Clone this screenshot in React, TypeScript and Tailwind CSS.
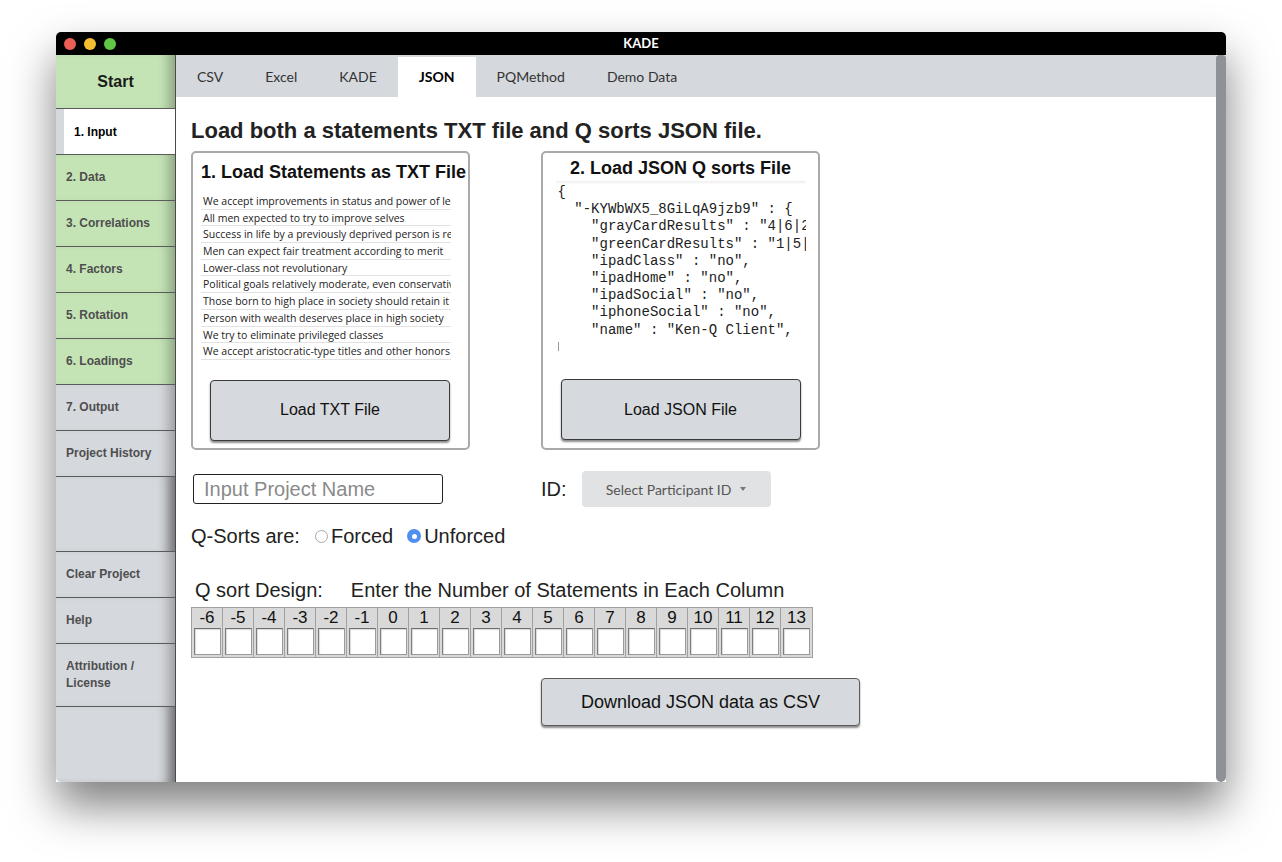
import React from "react";

const sideItems: { label: string; kind: "green" | "grey" | "active" | "blank" }[] = [
  { label: "1. Input", kind: "active" },
  { label: "2. Data", kind: "green" },
  { label: "3. Correlations", kind: "green" },
  { label: "4. Factors", kind: "green" },
  { label: "5. Rotation", kind: "green" },
  { label: "6. Loadings", kind: "green" },
  { label: "7. Output", kind: "grey" },
  { label: "Project History", kind: "grey" },
  { label: "", kind: "blank" },
  { label: "Clear Project", kind: "grey" },
  { label: "Help", kind: "grey" },
  { label: "Attribution /\nLicense", kind: "grey" },
];

const statements = [
  "We accept improvements in status and power of leaders",
  "All men expected to try to improve selves",
  "Success in life by a previously deprived person is rewarded",
  "Men can expect fair treatment according to merit",
  "Lower-class not revolutionary",
  "Political goals relatively moderate, even conservative",
  "Those born to high place in society should retain it",
  "Person with wealth deserves place in high society",
  "We try to eliminate privileged classes",
  "We accept aristocratic-type titles and other honors",
];

const codeLines = [
  "{",
  '  "-KYWbWX5_8GiLqA9jzb9" : {',
  '    "grayCardResults" : "4|6|2|5",',
  '    "greenCardResults" : "1|5|3",',
  '    "ipadClass" : "no",',
  '    "ipadHome" : "no",',
  '    "ipadSocial" : "no",',
  '    "iphoneSocial" : "no",',
  '    "name" : "Ken-Q Client",',
];

const cols = [-6, -5, -4, -3, -2, -1, 0, 1, 2, 3, 4, 5, 6, 7, 8, 9, 10, 11, 12, 13];

const tabs = ["CSV", "Excel", "KADE", "JSON", "PQMethod", "Demo Data"];

const shade = "shadow-[inset_-14px_0_12px_-8px_rgba(0,0,0,0.28)]";

function Sidebar() {
  return (
    <div className={"w-[120px] shrink-0 flex flex-col bg-[#d5d8dd] border-r border-[#4a4a4a] rounded-bl-[5px] overflow-hidden " + shade}>
      <div className={"h-[54px] shrink-0 bg-[#c5e4b6] border-b border-[#5a5a5a] flex items-center justify-center text-[16px] font-bold text-[#1a1a1a] " + shade}>
        Start
      </div>
      {sideItems.map((it, i) => {
        if (it.kind === "active") {
          return (
            <div key={i} className="h-[46px] shrink-0 border-b border-[#5a5a5a] bg-[#d5d8dd] pl-[8px]">
              <div className="h-full bg-white flex items-center pl-[10px] text-[12px] font-bold text-black">{it.label}</div>
            </div>
          );
        }
        if (it.kind === "blank") {
          return <div key={i} className={"h-[75px] shrink-0 border-b border-[#5a5a5a] " + shade} />;
        }
        const multi = it.label.includes("\n");
        return (
          <div
            key={i}
            className={
              "shrink-0 border-b border-[#5a5a5a] flex items-center pl-[10px] text-[12px] font-bold text-[#4e4e4e] leading-[17px] whitespace-pre " +
              shade +
              (multi ? " h-[63px] " : " h-[46px] ") +
              (it.kind === "green" ? "bg-[#c5e4b6]" : "bg-[#d5d8dd]")
            }
          >
            {it.label}
          </div>
        );
      })}
      <div className={"flex-1 " + shade} />
    </div>
  );
}

function BigButton({ label, className }: { label: string; className: string }) {
  return (
    <div
      className={
        "bg-[#d6d9dd] border border-[#3a3a3a] rounded-[4px] shadow-[0_2px_2px_rgba(0,0,0,0.45)] flex items-center justify-center text-[#111] " +
        className
      }
    >
      {label}
    </div>
  );
}

export default function App() {
  return (
    <div className="w-[1282px] h-[862px] bg-white pt-[32px] pl-[56px]" style={{ fontFamily: '"Liberation Sans", Arial, sans-serif' }}>
      <div className="w-[1170px] h-[750px] flex flex-col rounded-t-[5px] shadow-[0_24px_45px_rgba(0,0,0,0.5)] bg-white">
        {/* Title bar */}
        <div className="h-[23px] shrink-0 bg-black rounded-t-[5px] flex items-center px-[8px]">
          <div className="flex gap-[8px]">
            <div className="w-[12px] h-[12px] rounded-full bg-[#ec5f57]" />
            <div className="w-[12px] h-[12px] rounded-full bg-[#f4be33]" />
            <div className="w-[12px] h-[12px] rounded-full bg-[#5fc745]" />
          </div>
          <div className="flex-1 text-center text-white text-[13px] font-bold pr-[52px]" style={{ fontFamily: "Lato, sans-serif" }}>
            KADE
          </div>
        </div>
        {/* Body */}
        <div className="flex-1 flex min-h-0">
          <Sidebar />
          <div className="flex-1 flex flex-col min-w-0">
            {/* Tabs */}
            <div className="h-[42px] shrink-0 bg-[#d5d8dd] flex items-end" style={{ fontFamily: "Lato, sans-serif" }}>
              {tabs.map((t) => (
                <div
                  key={t}
                  className={
                    "px-[21px] h-[40px] flex items-center text-[14px] pb-[2px] " +
                    (t === "JSON" ? "bg-white text-black font-bold" : "text-[#333]")
                  }
                >
                  {t}
                </div>
              ))}
            </div>
            {/* Content */}
            <div className="flex-1 bg-white pl-[15px] pt-[22px]">
              <div className="text-[22px] font-bold text-[#222] leading-[24px]">
                Load both a statements TXT file and Q sorts JSON file.
              </div>
              <div className="flex gap-[71px] mt-[8px]">
                {/* Panel 1 */}
                <div className="w-[279px] h-[299px] border-2 border-[#a9a9a9] rounded-[5px] flex flex-col pl-[8px]">
                  <div className="text-[18px] font-bold text-[#111] mt-[9px] leading-[20px] whitespace-nowrap">1. Load Statements as TXT File</div>
                  <div className="mt-[11px] w-[250px] overflow-hidden" style={{ fontFamily: '"Open Sans", sans-serif' }}>
                    {statements.map((s, i) => (
                      <div key={i} className="h-[16.7px] border-b border-[#e2e2e2] text-[10.5px] leading-[16px] text-[#222] whitespace-nowrap pl-[2px]">
                        {s}
                      </div>
                    ))}
                  </div>
                  <BigButton label="Load TXT File" className="w-[240px] h-[61px] ml-[9px] mt-[20px] text-[16px]" />
                </div>
                {/* Panel 2 */}
                <div className="w-[279px] h-[299px] border-2 border-[#a9a9a9] rounded-[5px] flex flex-col items-center">
                  <div className="text-[18px] font-bold text-[#111] mt-[5px] leading-[20px] whitespace-nowrap">2. Load JSON Q sorts File</div>
                  <div className="mt-[3px] w-[250px] h-[170px] overflow-hidden border-t border-[#f0f0f0] shadow-[inset_0_3px_3px_-2px_rgba(0,0,0,0.06)] pl-[2px] pt-[2px]">
                    {codeLines.map((l, i) => (
                      <div key={i} className="text-[14px] leading-[17.2px] text-[#222] whitespace-pre" style={{ fontFamily: '"Liberation Mono", "Courier New", monospace' }}>
                        {l}
                      </div>
                    ))}
                    <div className="w-px h-[11px] bg-[#999] mt-[3px]" />
                  </div>
                  <BigButton label="Load JSON File" className="w-[240px] h-[61px] mt-[28px] text-[16px]" />
                </div>
              </div>
              {/* Input row */}
              <div className="flex items-center mt-[21px] h-[36px]">
                <div className="ml-[2px] w-[250px] h-[30px] border border-[#222] rounded-[3px] flex items-center pl-[10px] text-[20px] text-[#8a8a8a]">
                  Input Project Name
                </div>
                <div className="ml-[98px] text-[20px] text-[#222]">ID:</div>
                <div className="ml-[15px] w-[189px] h-[36px] bg-[#e1e2e4] rounded-[4px] flex items-center justify-center gap-[9px] text-[14px] text-[#555]" style={{ fontFamily: "Lato, sans-serif" }}>
                  <span>Select Participant ID</span>
                  <span className="w-0 h-0 border-l-[3.5px] border-r-[3.5px] border-t-[4px] border-l-transparent border-r-transparent border-t-[#777]" />
                </div>
              </div>
              {/* Radios */}
              <div className="flex items-center mt-[17px] text-[20px] text-[#222] h-[24px]">
                <span>Q-Sorts are:</span>
                <span className="ml-[15px] w-[13px] h-[13px] rounded-full border border-[#a8a8a8] bg-white" />
                <span className="ml-[3px]">Forced</span>
                <span className="ml-[14px] w-[14px] h-[14px] rounded-full bg-[#4f8ff0] flex items-center justify-center">
                  <span className="w-[5px] h-[5px] rounded-full bg-white" />
                </span>
                <span className="ml-[3px]">Unforced</span>
              </div>
              {/* Q sort design */}
              <div className="mt-[31px] ml-[4px] flex text-[20px] text-[#222] leading-[22px]">
                <span>Q sort Design:</span>
                <span className="ml-[28px]">Enter the Number of Statements in Each Column</span>
              </div>
              <div className="mt-[6px] flex w-max border border-[#a0a0a0] bg-[#d9d9d9]">
                {cols.map((c) => (
                  <div key={c} className="w-[31px] h-[49px] border-r border-[#a0a0a0] last:border-r-0 flex flex-col items-center">
                    <div className="h-[20px] text-[17px] leading-[20px] text-[#111]">{c}</div>
                    <div className="w-[27px] h-[27px] bg-white border border-[#9a9a9a] border-t-[#6e6e6e] border-l-[#7e7e7e] shadow-[inset_1px_1px_1px_rgba(0,0,0,0.15)]" />
                  </div>
                ))}
              </div>
              {/* Download */}
              <div className="mt-[20px] ml-[350px]">
                <BigButton label="Download JSON data as CSV" className="w-[319px] h-[48px] text-[18px] border-[#5a5a5a]" />
              </div>
            </div>
          </div>
          {/* Scrollbar */}
          <div className="w-[10px] shrink-0 bg-white flex">
            <div className="w-[10px] h-full bg-[#8e9296] rounded-t-[4px] rounded-b-[6px]" />
          </div>
        </div>
      </div>
    </div>
  );
}
